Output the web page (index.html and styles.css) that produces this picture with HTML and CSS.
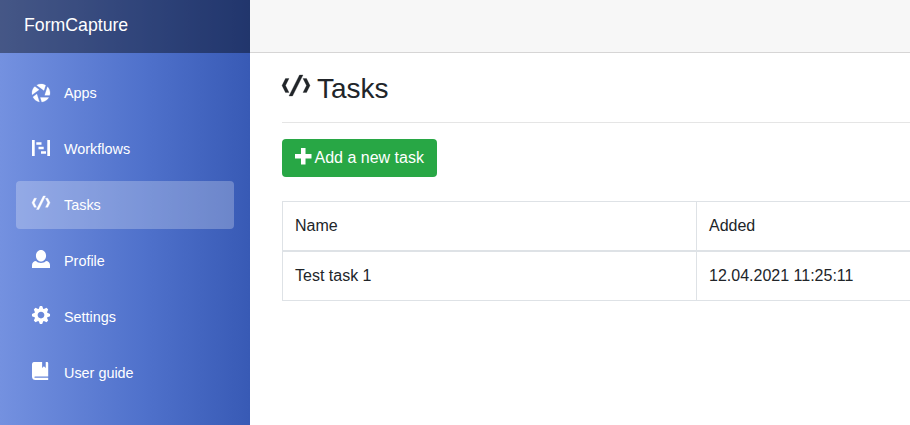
FILE: index.html
```html
<!DOCTYPE html>
<html lang="en">
<head>
<meta charset="utf-8">
<title>FormCapture</title>
<link rel="stylesheet" href="styles.css">
</head>
<body>
<div class="app">
  <aside class="sidebar">
    <div class="brand">FormCapture</div>
    <nav class="nav">
      <a class="nav-link"><svg class="icon aperture" viewBox="0 0 8 8"><path d="M4 0c-.69 0-1.34.19-1.91.5l3.22 2.34.75-2.25c-.6-.36-1.31-.59-2.06-.59zm-2.75 1.13c-.76.73-1.25 1.74-1.25 2.88 0 .25.02.48.06.72l3.09-2.22-1.91-1.38zm5.63.13l-1.22 3.75h2.19c.08-.32.16-.65.16-1 0-1.07-.44-2.03-1.13-2.75zm-4.72 3.22l-1.75 1.25c.55 1.13 1.6 1.99 2.88 2.22l-1.13-3.47zm1.56 1.53l.63 1.97c1.33-.12 2.46-.88 3.09-1.97h-3.72z"/></svg>Apps</a>
      <a class="nav-link"><svg class="icon" viewBox="0 0 18 18"><path d="M0 0h2.7v16h-2.7zM15.3 0h2.7v16h-2.7zM4.3 2.2h5.2v2.5h-5.2zM6.5 6.8h5.2v2.5h-5.2zM9 11.3h5v2.5h-5z"/></svg>Workflows</a>
      <a class="nav-link active"><svg class="icon bold" viewBox="0 0 8 8"><path d="M5 0l-3 6h1l3-6h-1zm-4 1l-1 2 1 2h1l-1-2 1-2h-1zm5 0l1 2-1 2h1l1-2-1-2h-1z"/></svg>Tasks</a>
      <a class="nav-link"><svg class="icon raised" viewBox="0 0 8 8"><path d="M4 0c-1.3 0-2.25 1.12-2.25 2.5s.95 2.6 2.25 2.6 2.25-1.22 2.25-2.6-.95-2.5-2.25-2.5zm-2.2 4.9c-1.06.05-1.8.82-1.8 1.8v1.3h8v-1.3c0-.98-.74-1.75-1.8-1.8-.54.61-1.39.85-2.2.85-.81 0-1.66-.24-2.2-.85z"/></svg>Profile</a>
      <a class="nav-link"><svg class="icon raised" viewBox="0 0 8 8"><path d="M3.5 0l-.5 1.19c-.1.03-.19.08-.28.13l-1.19-.5-.72.72.5 1.19c-.05.1-.09.18-.13.28l-1.19.5v1l1.19.5c.04.1.08.18.13.28l-.5 1.19.72.72 1.19-.5c.09.04.18.09.28.13l.5 1.19h1l.5-1.19c.09-.04.19-.08.28-.13l1.19.5.72-.72-.5-1.19c.04-.09.09-.19.13-.28l1.19-.5v-1l-1.19-.5c-.03-.09-.08-.19-.13-.28l.5-1.19-.72-.72-1.19.5c-.09-.04-.19-.09-.28-.13l-.5-1.19h-1zm.5 2.5c.83 0 1.5.67 1.5 1.5s-.67 1.5-1.5 1.5-1.5-.67-1.5-1.5.67-1.5 1.5-1.5z"/></svg>Settings</a>
      <a class="nav-link"><svg class="icon raised" viewBox="0 0 8 8"><path d="M1 0c-.07 0-.13.01-.19.03-.39.08-.7.39-.78.78-.03.06-.03.12-.03.19v5.5c0 .83.67 1.5 1.5 1.5h5.7v-1h-5.7c-.28 0-.5-.1-.5-.3s.22-.3.5-.3h5.7v-5.9c0-.28-.22-.5-.5-.5h-.6v2.7l-.8-.8-.8.8v-2.7h-3z"/></svg>User guide</a>
    </nav>
  </aside>
  <div class="main">
    <header class="top-row"></header>
    <main class="content">
      <h1 class="title"><svg class="title-icon" viewBox="0 0 8 8"><path d="M5 0l-3 6h1l3-6h-1zm-4 1l-1 2 1 2h1l-1-2 1-2h-1zm5 0l1 2-1 2h1l1-2-1-2h-1z"/></svg>Tasks</h1>
      <button class="btn" type="button"><svg class="btn-icon" viewBox="0 0 8 8"><path d="M2.9 0v2.9h-2.9v2.2h2.9v2.9h2.2v-2.9h2.9v-2.2h-2.9v-2.9h-2.2z"/></svg>Add a new task</button>
      <div class="table">
        <div class="row head"><div class="cell">Name</div><div class="cell">Added</div></div>
        <div class="row"><div class="cell">Test task 1</div><div class="cell">12.04.2021 11:25:11</div></div>
      </div>
    </main>
  </div>
</div>
</body>
</html>
```
FILE: styles.css
```css
* { box-sizing: border-box; }
body {
  margin: 0;
  font: 16px/24px "Liberation Sans", Arial, sans-serif;
  color: #212529;
  background: #fff;
}
svg { fill: currentColor; flex: none; overflow: visible; }
.app { display: flex; height: 425px; }
.sidebar {
  flex: none;
  width: 250px;
  color: #fff;
  background: linear-gradient(90deg, #7491e0 0%, #4f71cb 58%, #385ab5 100%);
}
.brand {
  height: 53px;
  padding: 11px 24px;
  font-size: 17.7px;
  line-height: 28px;
  background: rgba(0, 0, 0, .4);
}
.nav {
  display: flex;
  flex-direction: column;
  gap: 8px;
  padding: 16px;
}
.nav-link {
  display: flex;
  align-items: center;
  height: 48px;
  padding: 0 16px;
  border-radius: 4px;
  font-size: 14.4px;
}
.nav-link.active { background: rgba(255, 255, 255, .25); }
.icon { width: 18px; height: 18px; margin-right: 14px; }
.icon.raised { margin-bottom: 4px; }
.aperture { stroke: currentColor; stroke-width: .1; }
.bold { stroke: currentColor; stroke-width: .16; }
.main { flex: 1; min-width: 0; }
.top-row {
  height: 53px;
  background: #f7f7f7;
  border-bottom: 1px solid #d6d5d5;
}
.content { padding: 17px 0 0 32px; }
.title {
  display: flex;
  height: 53px;
  margin: 0 0 16px;
  border-bottom: 1px solid #e5e5e5;
  font-size: 28px;
  font-weight: 400;
  line-height: 38px;
}
.title-icon {
  width: 28px;
  height: 28px;
  margin: 5px 7px 0 0;
  stroke: currentColor;
  stroke-width: .08;
}
.btn {
  display: flex;
  align-items: center;
  width: 155px;
  height: 38px;
  padding: 0 0 1px 13px;
  border: 0;
  border-radius: 4px;
  font: inherit;
  color: #fff;
  background: #28a745;
  white-space: nowrap;
}
.btn-icon { width: 16.5px; height: 16.5px; margin: 0 3px 3px 0; }
.table {
  margin-top: 24px;
  border: 1px solid #dee2e6;
  border-right: 0;
}
.row {
  display: grid;
  grid-template-columns: 413px 1fr;
  height: 48px;
}
.row.head { height: 50px; border-bottom: 2px solid #dee2e6; }
.cell { padding: 12px; }
.cell + .cell { border-left: 1px solid #dee2e6; }
```
